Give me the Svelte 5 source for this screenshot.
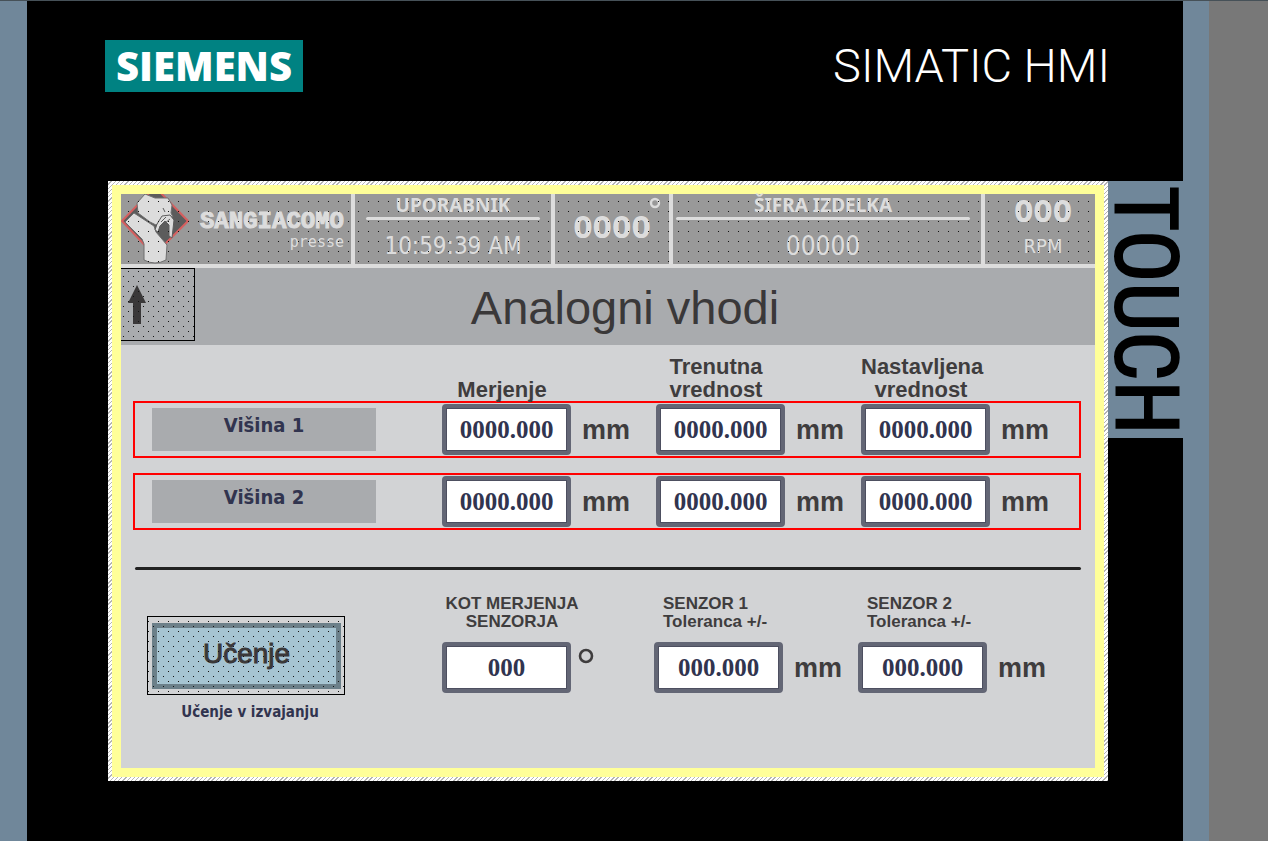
<script>
  const headings = [['Merjenje'], ['Trenutna', 'vrednost'], ['Nastavljena', 'vrednost']];
  let rows = $state([
    { label: 'Višina 1', values: ['0000.000', '0000.000', '0000.000'] },
    { label: 'Višina 2', values: ['0000.000', '0000.000', '0000.000'] }
  ]);
  let angle = $state('000');
  let sensors = $state([
    { id: 'senzor-1', title: 'SENZOR 1', value: '000.000' },
    { id: 'senzor-2', title: 'SENZOR 2', value: '000.000' }
  ]);
</script>

<div class="device">
  <div class="edge-left"></div>
  <div class="panel">
    <header class="brand">
      <div class="siemens">SIEMENS</div>
      <div class="simatic">SIMATIC HMI</div>
    </header>

    <div class="middle">
      <main class="hatch">
        <div class="screen">
          <div class="status dots">
            <div class="cell company">
              <svg class="logo" viewBox="0 0 68 70" aria-hidden="true">
                <path d="M34 -7 L67 27 L33 61 L1 27 Z" fill="#5c5c5c" stroke="#d65f5f" stroke-width="2" />
                <path d="M16 9 L24 0 L34 4 L47 4 L51 11 L50 19 L52 23 L46 22 L39 27 L35 31 L29 28 L17 19 Z" fill="#dcdcdc" stroke="#6e6e6e" />
                <path d="M4 28 L13 19 L33 32 L35 38 L46 51 L45 66 Q34 72 23 66 L23 50 L21 45 Z" fill="#dcdcdc" stroke="#6e6e6e" />
                <path d="M34 36 L36 30 L41 22 L49 21 L53 26 L51 44 L48 42 L48 31 L44 27 L39 32 L37 38 Z" fill="#dcdcdc" stroke="#5c5c5c" />
                <path d="M40 28 L45 23 M43 30 L49 25 M42 14 L44 18" stroke="#5c5c5c" fill="none" />
              </svg>
              <div class="company-name">
                <div class="sangiacomo">SANGIACOMO</div>
                <div class="presse">presse</div>
              </div>
            </div>
            <div class="cell stack">
              <div class="caption">UPORABNIK</div>
              <div class="rule"></div>
              <div class="time">10:59:39 AM</div>
            </div>
            <div class="cell degrees">
              <span class="big">0000</span>
              <svg class="ring" viewBox="0 0 12 12" aria-hidden="true"><circle cx="6" cy="6" r="4" fill="none" stroke="#dcdcdc" stroke-width="2.4" /></svg>
            </div>
            <div class="cell stack product">
              <div class="caption">ŠIFRA IZDELKA</div>
              <div class="rule"></div>
              <div class="code">00000</div>
            </div>
            <div class="cell rpm">
              <span class="big">000</span>
              <span class="unit-small">RPM</span>
            </div>
          </div>

          <div class="titlebar">
            <button class="up dots" aria-label="Nazaj">
              <svg viewBox="0 0 20 40" aria-hidden="true"><path d="M10 0 L19 18 H14 V39 H6 V18 H1 Z" fill="#3a3839" /></svg>
            </button>
            <h1>Analogni vhodi</h1>
          </div>

          <div class="body">
            <div class="grid headings">
              <span></span>
              {#each headings as lines}
                <div class="heading">{#each lines as line}<div>{line}</div>{/each}</div>
              {/each}
            </div>

            {#each rows as row}
              <div class="grid row">
                <div class="name">{row.label}</div>
                {#each row.values as _, i}
                  <label class="field">
                    <input type="text" aria-label="{row.label} {headings[i].join(' ')}" bind:value={row.values[i]} />
                    <span class="mm">mm</span>
                  </label>
                {/each}
              </div>
            {/each}

            <hr />

            <div class="grid lower">
              <div class="learn-box">
                <div class="learn-frame dots"><button class="learn">Učenje</button></div>
                <div class="learning">Učenje v izvajanju</div>
              </div>
              <div class="setting">
                <label class="small centered" for="kot"><span>KOT MERJENJA</span><span>SENZORJA</span></label>
                <div class="field">
                  <input id="kot" type="text" bind:value={angle} />
                  <svg class="degree" viewBox="0 0 16 16" aria-hidden="true"><circle cx="8" cy="8" r="6" fill="none" stroke="#3f3d3e" stroke-width="2.6" /></svg>
                </div>
              </div>
              {#each sensors as sensor}
                <div class="setting">
                  <label class="small" for={sensor.id}><span>{sensor.title}</span><span>Toleranca +/-</span></label>
                  <div class="field">
                    <input id={sensor.id} type="text" bind:value={sensor.value} />
                    <span class="mm">mm</span>
                  </div>
                </div>
              {/each}
            </div>
          </div>
        </div>
      </main>
      <aside class="touch">TOUCH</aside>
    </div>
  </div>
  <div class="edge-right"></div>
  <div class="outside"></div>
</div>

<style>
  :global(body) {
    margin: 0;
    background: #787878;
  }
  * {
    box-sizing: border-box;
  }
  .device {
    display: flex;
    min-height: 100vh;
    border-top: 1px solid #465158;
    font-family: 'DejaVu Sans Condensed', 'DejaVu Sans', sans-serif;
  }
  .edge-left {
    flex: 0 0 27px;
    background: #70879a;
  }
  .edge-right {
    flex: 0 0 26px;
    background: #70879a;
  }
  .outside {
    flex: 0 0 59px;
    background: #787878;
  }
  .panel {
    flex: 1;
    min-width: 0;
    background: #000;
  }
  .brand {
    display: flex;
    justify-content: space-between;
    align-items: center;
    height: 180px;
    padding: 0 73px 50px 78px;
    color: #fff;
  }
  .siemens {
    padding: 0 11px;
    background: #008282;
    font: 800 40px/52px 'Open Sans', sans-serif;
  }
  .simatic {
    font: 300 47px/54px Roboto, sans-serif;
  }
  .middle {
    display: flex;
    align-items: flex-start;
    padding-left: 81px;
  }
  .hatch {
    flex: 1;
    min-width: 0;
    padding: 4px;
    background: repeating-linear-gradient(135deg, #fff 0 2px, #b4b4b4 2px 3px);
  }
  .screen {
    border: 9px solid #ffff99;
    background: #d2d3d5;
  }
  .touch {
    flex: 0 0 75px;
    display: flex;
    justify-content: center;
    align-items: center;
    height: 257px;
    padding-top: 2px;
    background: #70879a;
    color: #000;
    writing-mode: vertical-rl;
    font: 87px/75px 'Liberation Sans Narrow', 'Roboto Condensed', 'Roboto', sans-serif;
    -webkit-text-stroke: 2px #000;
  }

  /* Dot lattice laid over disabled areas */
  .dots {
    position: relative;
  }
  .dots::after {
    --dot: conic-gradient(from 90deg at 9px 9px, #111 90deg, transparent 0);
    content: '';
    position: absolute;
    inset: 0;
    pointer-events: none;
    background: var(--dot) -2px -2px / 10px 10px;
  }
  .up.dots::after {
    background: var(--dot) -2px 3px / 10px 10px, var(--dot) 3px 8px / 10px 10px;
  }
  .learn-frame.dots::after {
    background: var(--dot) 1px 5px / 10px 10px, var(--dot) 6px 0 / 10px 10px;
  }

  .status {
    display: grid;
    grid-template-columns: 234fr 200fr 118fr 312fr 110fr;
    border-bottom: 4px solid #dcdcdc;
    background: #999;
    color: #dcdcdc;
  }
  .cell {
    display: flex;
    height: 70px;
    border-right: 4px solid #dcdcdc;
  }
  .cell:last-child {
    border-right: 0;
  }
  .company {
    justify-content: space-between;
    padding-right: 7px;
  }
  .logo {
    width: 68px;
    height: 70px;
  }
  .company-name {
    display: flex;
    flex-direction: column;
    align-items: flex-end;
    padding-top: 16px;
  }
  .sangiacomo {
    font: bold 24px/24px 'Liberation Mono', monospace;
    -webkit-text-stroke: 1px #dcdcdc;
  }
  .presse {
    font: 15px/16px 'DejaVu Sans Mono', monospace;
  }
  .stack {
    flex-direction: column;
    align-items: center;
    padding: 0 11px;
  }
  .product {
    padding-left: 3px;
  }
  .caption {
    font: 700 19px/22px 'Noto Sans', sans-serif;
  }
  .rule {
    align-self: stretch;
    height: 3px;
    margin: 1px 0 9px;
    border-radius: 2px;
    background: #dcdcdc;
  }
  .time,
  .code {
    font-size: 24px;
    line-height: 34px;
  }
  .code {
    font-size: 26px;
  }
  .degrees {
    position: relative;
    justify-content: center;
    align-items: center;
    padding-bottom: 4px;
  }
  .ring {
    position: absolute;
    top: 3px;
    right: 8px;
    width: 12px;
    height: 12px;
  }
  .big {
    font-size: 31px;
    line-height: 34px;
    font-weight: 700;
  }
  .rpm {
    flex-direction: column;
    align-items: center;
    padding-left: 6px;
  }
  .unit-small {
    font-size: 20px;
    line-height: 36px;
  }

  .titlebar {
    display: grid;
    grid-template-columns: 74px 1fr 40px;
    align-items: start;
    height: 77px;
    background: #a9abae;
  }
  .up {
    height: 73px;
    padding: 0 0 0 6px;
    border: 1px solid #000;
    border-left: 0;
    background: none;
    text-align: left;
  }
  .up svg {
    display: block;
    width: 20px;
    height: 40px;
  }
  h1 {
    margin: 0;
    color: #3a3839;
    font: 47px/80px 'Liberation Sans', Arial, sans-serif;
    text-align: center;
  }

  .body {
    padding: 10px 14px 45px 12px;
    color: #3f3d3e;
    font-family: 'Liberation Sans', Arial, sans-serif;
  }
  .grid {
    display: grid;
    grid-template-columns: 290fr 214fr 205fr 218fr;
    padding-left: 17px;
    border: 2px solid transparent;
  }
  .headings {
    align-items: end;
    border-width: 0 2px;
  }
  .heading {
    width: 120px;
    font-size: 22px;
    line-height: 23px;
    font-weight: 700;
    text-align: center;
  }
  .row {
    align-items: center;
    height: 57px;
    margin-bottom: 15px;
    border-color: #f00;
  }
  .name {
    width: 224px;
    padding-bottom: 9px;
    background: #a9abae;
    color: #31344f;
    font: 700 20px/34px 'DejaVu Sans Condensed', 'DejaVu Sans', sans-serif;
    text-align: center;
  }
  .field {
    display: flex;
    align-items: center;
    gap: 11px;
  }
  input {
    width: 129px;
    height: 51px;
    padding: 0;
    border: 5px solid #636675;
    border-radius: 4px;
    outline: 1px solid #4d4f60;
    outline-offset: -5px;
    background: #fff;
    color: #31344f;
    font: 700 25px/38px 'Liberation Serif', serif;
    text-align: center;
  }
  .mm {
    font-size: 27px;
    line-height: 36px;
    font-weight: 700;
  }
  hr {
    height: 3px;
    margin: 37px 0 25px 2px;
    border: 0;
    border-radius: 2px;
    background: #222;
  }
  .lower {
    grid-template-columns: 295fr 212fr 204fr 221fr;
    padding-left: 12px;
    border-width: 0 2px;
  }
  .learn-box {
    width: 198px;
    padding-top: 21px;
  }
  .learn-frame {
    padding: 6px 3px 5px 4px;
    border: 1px solid #000;
  }
  .learn {
    display: block;
    width: 100%;
    height: 66px;
    padding: 0 0 4px;
    border: 5px solid #6c808a;
    background: #a6c4d2;
    color: #3a3839;
    font: 28px/52px 'Liberation Sans', Arial, sans-serif;
    -webkit-text-stroke: 1px #3a3839;
  }
  .learning {
    margin-top: 6px;
    padding-left: 8px;
    color: #31344f;
    font: 700 15px/22px 'DejaVu Sans Condensed', 'DejaVu Sans', sans-serif;
    text-align: center;
  }
  .small {
    display: flex;
    flex-direction: column;
    height: 47px;
    padding-left: 9px;
    font-size: 17px;
    line-height: 18px;
    font-weight: 700;
    white-space: nowrap;
  }
  .small.centered {
    width: 140px;
    padding-left: 0;
    align-items: center;
  }
  .degree {
    width: 16px;
    height: 16px;
    margin: 0 0 24px -4px;
  }
</style>
